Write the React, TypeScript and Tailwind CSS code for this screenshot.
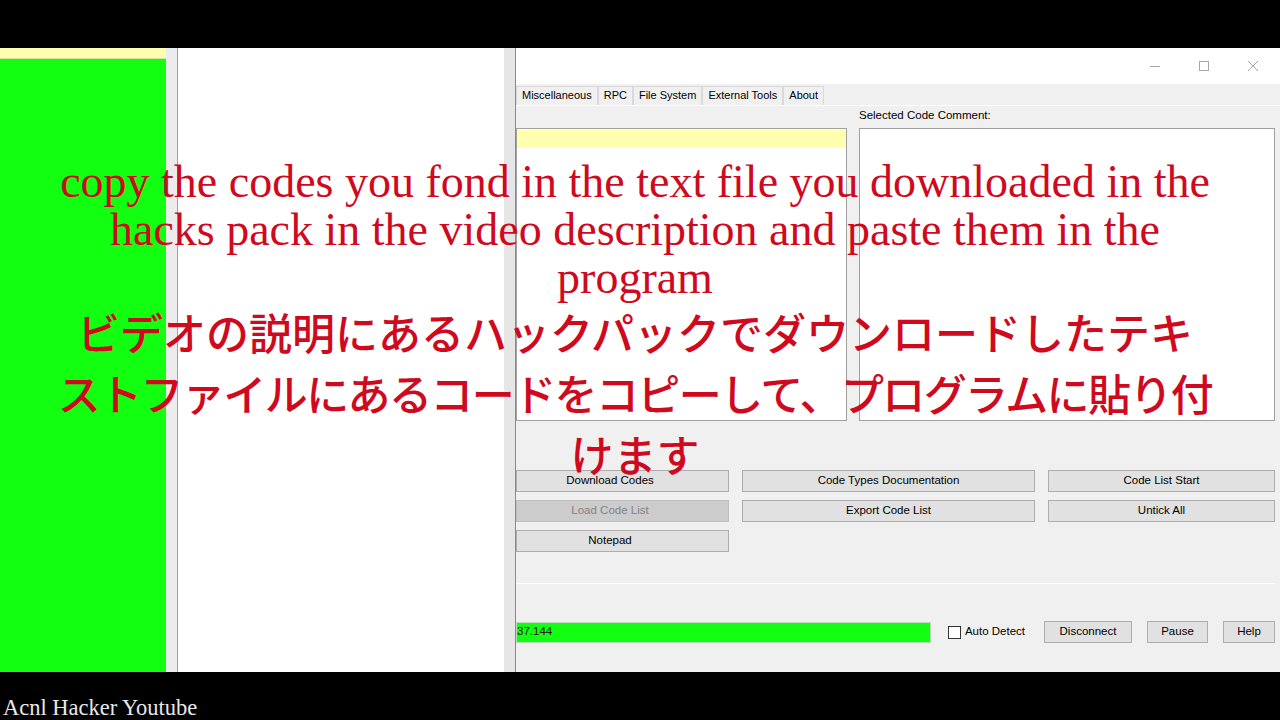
import clsx from "clsx";

const tabs = ["Miscellaneous", "RPC", "File System", "External Tools", "About"];

const WinButton = ({
  label,
  disabled,
  primary,
  className,
}: {
  label: string;
  disabled?: boolean;
  primary?: boolean;
  className?: string;
}) => (
  <div
    className={clsx(
      "flex h-[22px] items-center justify-center border text-[11.5px]",
      disabled
        ? "border-[#bfbfbf] bg-[#cccccc] text-[#838383]"
        : "border-[#adadad] bg-[#e1e1e1] text-black",
      primary && "border-[#7ea6d6]",
      className
    )}
  >
    {label}
  </div>
);

const TitleControls = () => (
  <div className="flex h-[36px] items-center justify-end gap-[37px] bg-white pr-[21px] text-[#a8a8a8]">
    <svg width="12" height="12" viewBox="0 0 12 12">
      <line x1="1" y1="6.5" x2="11" y2="6.5" stroke="currentColor" strokeWidth="1" />
    </svg>
    <svg width="12" height="12" viewBox="0 0 12 12">
      <rect x="1.5" y="1.5" width="9" height="9" fill="none" stroke="currentColor" strokeWidth="1" />
    </svg>
    <svg width="12" height="12" viewBox="0 0 12 12">
      <path d="M1 1 L11 11 M11 1 L1 11" stroke="currentColor" strokeWidth="1" />
    </svg>
  </div>
);

const MainWindow = () => (
  <div className="flex flex-1 flex-col bg-[#f0f0f0] font-['Liberation_Sans',Arial,sans-serif]">
    <TitleControls />
    {/* tab strip */}
    <div className="flex h-[21px] items-end">
      {tabs.map((t) => (
        <div
          key={t}
          className="flex h-[19px] items-center border border-b-0 border-[#d9d9d9] bg-[#f0f0f0] px-[5px] pb-[1px] text-[11px] text-black"
        >
          {t}
        </div>
      ))}
    </div>
    <div className="flex flex-1 flex-col border-t border-white pr-[5px]">
      <div className="grid grid-cols-[331px_1fr] gap-x-[12px]">
        <div />
        <div className="flex h-[22px] items-center pb-[3px] text-[11.5px] text-black">
          Selected Code Comment:
        </div>
        <div className="h-[293px] border border-[#a0a0a0] bg-white pt-[1px]">
          <div className="h-[18px] bg-[#ffffb0]" />
        </div>
        <div className="h-[293px] border border-[#a0a0a0] bg-white" />
      </div>

      <div className="mt-[49px] grid grid-cols-[213px_293px_1fr] gap-x-[13px] gap-y-[8px]">
        <WinButton label="Download Codes" className="pr-[25px]" />
        <WinButton label="Code Types Documentation" />
        <WinButton label="Code List Start" />
        <WinButton label="Load Code List" disabled className="pr-[25px]" />
        <WinButton label="Export Code List" />
        <WinButton label="Untick All" />
        <WinButton label="Notepad" className="pr-[25px]" />
      </div>

      <div className="mt-[31px] border-t border-white" />

      <div className="mt-[37px] flex items-center">
        <div className="flex h-[21px] w-[415px] items-center border border-[#b9dcb9] bg-[#12fe12] text-[11.5px] text-[#1a1a1a]">
          37.144
        </div>
        <div className="ml-[17px] h-[13px] w-[13px] border border-[#333] bg-white" />
        <span className="ml-[4px] text-[11.5px] text-black">Auto Detect</span>
        <WinButton label="Disconnect" className="ml-[19px] w-[88px]" />
        <WinButton label="Pause" className="ml-[15px] w-[61px]" />
        <WinButton label="Help" primary className="ml-[15px] w-[52px]" />
      </div>
    </div>
  </div>
);

export default function App() {
  return (
    <div className="relative flex h-[720px] w-[1280px] flex-col overflow-hidden bg-black">
      <div className="h-[48px] bg-black" />

      <div className="flex h-[624px]">
        <div className="flex w-[166px] flex-col bg-[#12ff12]">
          <div className="h-[11px] border-b border-[#d8e0a0] bg-[#ffffb0]" />
        </div>
        <div className="w-[12px] border-r border-[#a0a0a0] bg-[#ececec]" />
        <div className="w-[326px] bg-white" />
        <div className="w-[12px] border-r border-[#8a8a8a] bg-[#e6e6e6]" />
        <MainWindow />
      </div>

      <div className="h-[48px] bg-black pl-[3px] pt-[25px] font-['Liberation_Serif',serif] text-[22.5px] leading-none text-[#e8e8e8]">
        Acnl Hacker Youtube
      </div>

      {/* caption over the video */}
      <div className="pointer-events-none absolute left-0 top-[158px] flex w-[1270px] flex-col items-center text-[#cf0a1e]">
        <div className="font-['Liberation_Serif',serif] text-[46px] leading-[48px]">
          <div className="whitespace-nowrap text-center">
            copy the codes you fond in the text file you downloaded in the
          </div>
          <div className="whitespace-nowrap text-center">
            hacks pack in the video description and paste them in the
          </div>
          <div className="whitespace-nowrap text-center">program</div>
        </div>
        <div className="-mt-[1px] font-['Noto_Sans_CJK_JP',sans-serif] text-[43px] font-medium leading-[61px]">
          <div className="whitespace-nowrap text-center">
            ビデオの説明にあるハックパックでダウンロードしたテキ
          </div>
          <div className="whitespace-nowrap text-center tracking-[-1.6px]">
            ストファイルにあるコードをコピーして、プログラムに貼り付
          </div>
          <div className="whitespace-nowrap text-center">けます</div>
        </div>
      </div>
    </div>
  );
}
